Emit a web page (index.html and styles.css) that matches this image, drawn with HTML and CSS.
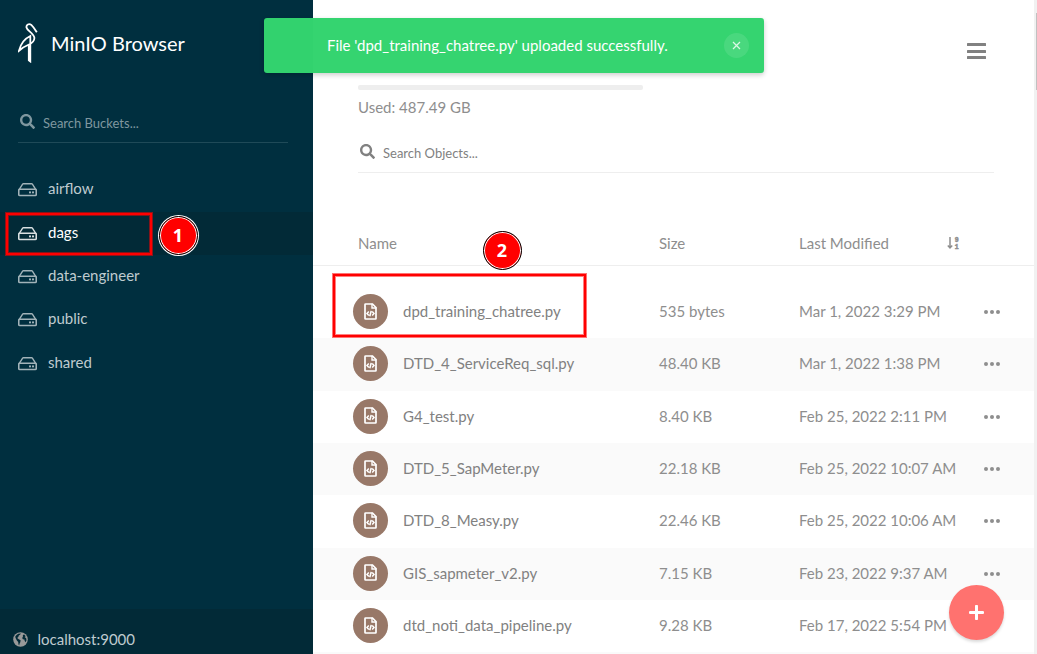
FILE: index.html
```
<!DOCTYPE html>
<html lang="en">
<head>
<meta charset="utf-8">
<title>MinIO Browser</title>
<link rel="stylesheet" href="styles.css">
</head>
<body>
<svg class="defs" width="0" height="0">
  <symbol id="search" viewBox="0 0 512 512"><path d="M505 442.700L405.300 343c-4.500-4.500-10.600-7-17-7H372c27.600-35.300 44-79.700 44-128C416 93.100 322.900 0 208 0S0 93.100 0 208s93.100 208 208 208c48.300 0 92.700-16.400 128-44v16.300c0 6.400 2.500 12.500 7 17l99.700 99.700c9.400 9.400 24.600 9.400 33.900 0l28.300-28.300c9.400-9.400 9.400-24.600.1-34zM208 336c-70.700 0-128-57.200-128-128 0-70.700 57.200-128 128-128 70.700 0 128 57.200 128 128 0 70.700-57.200 128-128 128z"/></symbol>
  <symbol id="drive" viewBox="0 0 19 14"><path d="M1 6.800 4.600 1.200Q4.900.8 5.400.8H13.600Q14.100.8 14.400 1.200L18 6.800" fill="none" stroke="currentColor" stroke-width="1.400"/><rect x=".75" y="6.300" width="17.500" height="6.200" rx="1" fill="none" stroke="currentColor" stroke-width="1.600"/><circle cx="12" cy="9.400" r="1.050"/><circle cx="15" cy="9.400" r="1.050"/></symbol>
  <symbol id="code" viewBox="0 0 13 17"><path d="M1.500 1H8.500L12 4.500V15.500Q12 16 11.500 16H1.500Q1 16 1 15.500V1.500Q1 1 1.500 1Z" fill="none" stroke="currentColor" stroke-width="1.700"/><path d="M8 .8V5H12.300" fill="none" stroke="currentColor" stroke-width="1.400"/><path d="M4.800 8.600 3 10.600 4.800 12.600M8.200 8.600 10 10.600 8.200 12.600M7.200 7.900 5.800 13.300" fill="none" stroke="currentColor" stroke-width="1.500"/></symbol>
  <symbol id="dots" viewBox="0 0 16 4"><circle cx="2" cy="2" r="2"/><circle cx="8" cy="2" r="2"/><circle cx="14" cy="2" r="2"/></symbol>
</svg>
<div class="app">
  <aside class="sidebar">
    <header class="brand">
      <svg class="logo" viewBox="0 0 20 40"><path d="M18.800 9.300C17 6.300 15 3.500 13.300 1.900C11 .1 8 1.600 8.500 4.500C9 7.600 15.500 10 16.300 14.400C16.900 18.500 14 20.300 10 22C6 23.600 3.500 25.500 1 27.700C2.500 21.500 6.500 15.700 12.300 13V38.500L10.800 37.400V22.500" fill="none" stroke="#fff" stroke-width="1.800"/></svg>
      <h1>MinIO Browser</h1>
    </header>
    <div class="search"><svg><use href="#search"/></svg><span>Search Buckets...</span></div>
    <nav class="buckets">
      <a><svg><use href="#drive"/></svg><span>airflow</span></a>
      <a class="active"><svg><use href="#drive"/></svg><span>dags</span></a>
      <a><svg><use href="#drive"/></svg><span>data-engineer</span></a>
      <a><svg><use href="#drive"/></svg><span>public</span></a>
      <a><svg><use href="#drive"/></svg><span>shared</span></a>
    </nav>
    <footer class="host"><svg viewBox="0 0 15 15"><circle cx="7.500" cy="7.500" r="7.300" fill="#999"/><path d="M5.300 1.800 8 1.500 7 2.800 5.800 3.500 5.300 5 4.200 6 5.800 7.300 7.600 8.300 7.300 10.300 6.600 11.500 6.200 13.300 5.500 12.400 5.200 9.900 3.900 8.400 2.800 6.400 2.200 4.700 3.500 2.900ZM9.900 3 11.200 2.500 12.700 4.300 11.600 5 13.200 6.300 13.500 8.300 12.600 10.300 11.700 9 11.400 7.400 9.900 7.200 9.200 6 9.900 4.800Z" fill="#022a37"/></svg>localhost:9000</footer>
  </aside>
  <main class="content">
    <div class="top">
      <div class="usage"><div class="bar"></div><span>Used: 487.49 GB</span></div>
      <div class="menu"><i></i><i></i><i></i></div>
    </div>
    <div class="search objects"><svg><use href="#search"/></svg><span>Search Objects...</span></div>
    <div class="head grid"><span class="title">Name</span><span>Size</span><span>Last Modified</span>
      <svg class="sort" viewBox="0 0 13 14"><path d="M3 1V12M.8 9.600 3 12 5.200 9.600" fill="none" stroke="#8e8e8e" stroke-width="1.500"/><text x="7.800" y="5.600">9</text><text x="7.800" y="12.900">1</text></svg>
    </div>
    <div class="rows">
      <div class="row grid"><span class="file"><b><svg><use href="#code"/></svg></b>dpd_training_chatree.py</span><span>535 bytes</span><span>Mar 1, 2022 3:29 PM</span><svg class="dots"><use href="#dots"/></svg></div>
      <div class="row grid"><span class="file"><b><svg><use href="#code"/></svg></b>DTD_4_ServiceReq_sql.py</span><span>48.40 KB</span><span>Mar 1, 2022 1:38 PM</span><svg class="dots"><use href="#dots"/></svg></div>
      <div class="row grid"><span class="file"><b><svg><use href="#code"/></svg></b>G4_test.py</span><span>8.40 KB</span><span>Feb 25, 2022 2:11 PM</span><svg class="dots"><use href="#dots"/></svg></div>
      <div class="row grid"><span class="file"><b><svg><use href="#code"/></svg></b>DTD_5_SapMeter.py</span><span>22.18 KB</span><span>Feb 25, 2022 10:07 AM</span><svg class="dots"><use href="#dots"/></svg></div>
      <div class="row grid"><span class="file"><b><svg><use href="#code"/></svg></b>DTD_8_Measy.py</span><span>22.46 KB</span><span>Feb 25, 2022 10:06 AM</span><svg class="dots"><use href="#dots"/></svg></div>
      <div class="row grid"><span class="file"><b><svg><use href="#code"/></svg></b>GIS_sapmeter_v2.py</span><span>7.15 KB</span><span>Feb 23, 2022 9:37 AM</span><svg class="dots"><use href="#dots"/></svg></div>
      <div class="row grid"><span class="file"><b><svg><use href="#code"/></svg></b>dtd_noti_data_pipeline.py</span><span>9.28 KB</span><span>Feb 17, 2022 5:54 PM</span></div>
      <div class="row grid"></div>
    </div>
  </main>
  <div class="scroll"><div class="thumb"></div></div>
</div>
<div class="toast"><span>File 'dpd_training_chatree.py' uploaded successfully.</span><div class="close"><svg viewBox="0 0 9 9"><path d="M1 1 8 8M8 1 1 8" stroke="#fff" stroke-width="1.300" opacity=".8"/></svg></div></div>
<div class="add"><svg viewBox="0 0 15 15"><path d="M7.500 1.200V13.800M1.200 7.500H13.800" stroke="#fff" stroke-width="3" stroke-linecap="round"/></svg></div>
<div class="mark mark-bucket"></div>
<div class="mark mark-file"></div>
<div class="step step-one">1</div>
<div class="step step-two">2</div>
</body>
</html>
```
FILE: styles.css
```
* { box-sizing: border-box; }
body { margin: 0; height: 654px; overflow: hidden; background: #fff; font: 15px/21px Lato, sans-serif; color: #8e8e8e; white-space: nowrap; }
svg { fill: currentColor; flex: none; display: block; }
.defs { position: absolute; }
.app { display: flex; height: 654px; }

.sidebar { width: 313px; background: #002f3f; display: flex; flex-direction: column; flex: none; }
.brand { display: flex; align-items: center; height: 88px; padding: 0 0 2px 18px; gap: 13px; color: #fff; }
.brand h1 { margin: 0; font-size: 20px; font-weight: 400; line-height: 28px; }
.logo { width: 20px; height: 40px; }
.search { display: flex; align-items: center; gap: 8px; margin: 13px 25px 0 18px; height: 42px; padding: 0 0 0 2px; border-bottom: 1px solid #1f4a58; color: #7f979f; font-size: 13px; }
.search svg { width: 15px; height: 15px; }
.search span { padding-top: 4px; }
.buckets { margin-top: 25.500px; }
.buckets a { height: 43.400px; display: flex; align-items: center; gap: 11px; padding: 0 0 3px 18px; color: #bfcbcf; }
.buckets svg { width: 19px; height: 14px; margin-top: 3px; opacity: .85; }
.buckets .active { background: #022a37; color: #fff; }
.host { margin-top: auto; height: 45px; background: #022a37; display: flex; align-items: center; gap: 9.500px; padding: 15px 0 0 13px; color: #bfcbcf; }
.host svg { width: 15px; height: 15px; }

.content { flex: 1; display: flex; flex-direction: column; overflow: hidden; }
.top { display: flex; justify-content: space-between; height: 130px; padding: 0 48px 0 45px; flex: none; }
.usage { padding-top: 85px; }
.bar { width: 285px; height: 5px; border-radius: 2px; background: #eee; margin-bottom: 7px; }
.menu { width: 19px; padding-top: 43px; display: flex; flex-direction: column; gap: 3.500px; }
.menu i { height: 3px; background: #818181; border-radius: .5px; flex: none; }
.search.objects { margin: 1px 40px 0 45px; color: #818181; border-color: #eee; flex: none; }
.grid { display: grid; grid-template-columns: 346px 140px 148px 1fr; align-items: center; }
.head { height: 93px; border-bottom: 1px solid #eee; padding-top: 48px; flex: none; }
.title { padding-left: 45px; }
.sort { width: 13px; height: 14px; }
.sort text { font: 700 6.500px "Liberation Mono", monospace; stroke: #8e8e8e; stroke-width: .5px; fill: #8e8e8e; }
.rows { padding-top: 20px; }
.row { height: 52.350px; padding-bottom: 1.300px; }
.row:nth-child(even) { background: #fafafa; }
.file { display: flex; align-items: center; gap: 15px; padding-left: 40px; color: #818181; }
.file b { width: 35px; height: 35px; border-radius: 50%; background: #987868; color: #fff; display: flex; align-items: center; justify-content: center; }
.file b svg { width: 13px; height: 17px; margin-top: -1px; }
.dots { width: 16px; height: 4px; margin: 1px 0 0 37px; }
.scroll { width: 3px; background: #f1f1f1; flex: none; padding: 13px 0 0 2px; }
.thumb { height: 77px; background: #c1c1c1; }

.toast { position: absolute; left: 264px; top: 18px; width: 500px; height: 55px; border-radius: 3px; background: #33d46f; opacity: .99; box-shadow: 0 2px 5px rgba(0,0,0,.2); color: #fff; display: flex; align-items: center; justify-content: space-between; padding: 0 15px 0 63px; }
.close { width: 25px; height: 25px; border-radius: 50%; background: rgba(255,255,255,.1); display: grid; place-items: center; }
.close svg { width: 9px; height: 9px; }
.add { position: absolute; left: 949px; top: 585px; width: 55px; height: 55px; border-radius: 50%; background: #ff726f; box-shadow: 0 2px 3px rgba(0,0,0,.15); display: grid; place-items: center; }
.add svg { width: 15px; height: 15px; }

.mark { position: absolute; border: 2px solid #f00; box-shadow: 0 0 0 1px rgba(255,0,0,.55), inset 0 0 0 1px rgba(255,0,0,.5); }
.mark-bucket { left: 6px; top: 213px; width: 146px; height: 42px; }
.mark-file { left: 333px; top: 274px; width: 253px; height: 63px; }
.step { position: absolute; width: 39px; height: 39px; border-radius: 50%; background: #f00; border: 1px solid #000; box-shadow: inset 0 0 0 1px #fff, 0 0 0 1px #fff; color: #fff; display: grid; place-items: center; font: 700 18px/24px "Noto Sans", sans-serif; }
.step-one { left: 158.500px; top: 215.500px; }
.step-two { left: 482.500px; top: 230.500px; }
```
